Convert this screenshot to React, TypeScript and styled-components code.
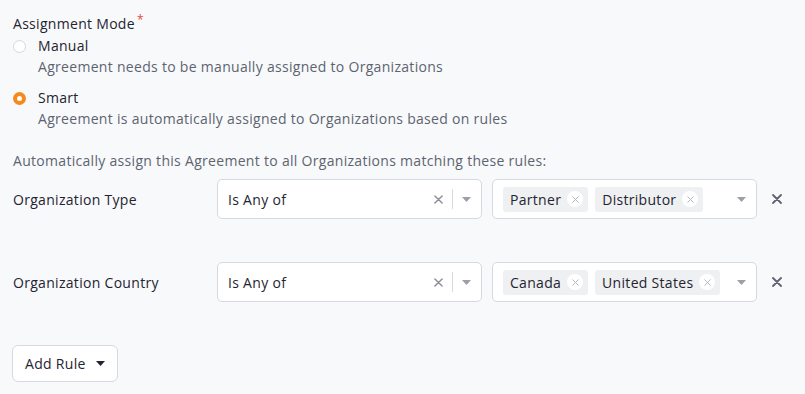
import React from 'react';
import styled, { createGlobalStyle } from 'styled-components';

const GlobalStyle = createGlobalStyle`
  body {
    margin: 0;
    background: #f8f9fb;
    font-family: 'Open Sans', 'Noto Sans', sans-serif;
    letter-spacing: 0.3px;
    color: #1f2430;
  }
`;

const Page = styled.div`
  padding: 13px 13px 12px 13px;
`;

const FieldLabel = styled.div`
  font-size: 14px;
  font-weight: 500;
  line-height: 22px;
  height: 22px;
  color: #1f2430;

  .req {
    color: #e5483c;
    font-size: 12px;
    line-height: 1;
    vertical-align: top;
    margin-left: 2px;
    position: relative;
    top: 1px;
  }
`;

const RadioOption = styled.label`
  display: grid;
  grid-template-columns: 25px 1fr;
  cursor: pointer;
  margin-bottom: 10px;
`;

const RadioDot = styled.span<{ $checked?: boolean }>`
  width: 13px;
  height: 13px;
  box-sizing: border-box;
  border-radius: 50%;
  margin-top: 5px;
  background: #fff;
  border: ${(p) => (p.$checked ? '4px solid #f58b1f' : '1px solid #d5d8de')};
`;

const OptionTitle = styled.div`
  font-size: 14px;
  line-height: 22px;
  color: #1f2430;
`;

const OptionDesc = styled.div`
  font-size: 14px;
  line-height: 20px;
  color: #5d6470;
`;

const Hint = styled.div`
  font-size: 14px;
  line-height: 20px;
  color: #5d6470;
  margin-top: 22px;
`;

const Rules = styled.div`
  display: flex;
  flex-direction: column;
  gap: 43px;
  margin-top: 8px;
`;

const RuleRow = styled.div`
  display: grid;
  grid-template-columns: 194px 265px 265px 20px;
  column-gap: 10px;
  align-items: center;
  height: 40px;
`;

const RuleLabel = styled.div`
  font-size: 14px;
  color: #1f2430;
`;

const SelectBox = styled.div`
  height: 40px;
  box-sizing: border-box;
  background: #fff;
  border: 1px solid #d6dae0;
  border-radius: 5px;
  display: flex;
  align-items: center;
  padding: 0 10px 0 10px;
`;

const SelectValue = styled.div`
  flex: 1;
  font-size: 14px;
  color: #1f2430;
`;

const Chips = styled.div`
  flex: 1;
  display: flex;
  gap: 7px;
`;

const Chip = styled.span`
  display: inline-flex;
  align-items: center;
  height: 25px;
  padding: 0 5px 0 7px;
  background: #eff0f2;
  border-radius: 3px;
  font-size: 14px;
  color: #1f2430;
`;

const ChipClose = styled.span`
  width: 16px;
  height: 16px;
  border-radius: 50%;
  background: #fff;
  margin-left: 6px;
  display: inline-flex;
  align-items: center;
  justify-content: center;
`;

const Indicators = styled.div`
  display: flex;
  align-items: center;
  gap: 9px;
`;

const Separator = styled.span`
  width: 1px;
  height: 20px;
  background: #d6dae0;
`;

const RemoveButton = styled.button`
  border: none;
  background: transparent;
  padding: 0;
  width: 20px;
  height: 20px;
  display: flex;
  align-items: center;
  justify-content: center;
  cursor: pointer;
`;

const AddButton = styled.button`
  margin-top: 43px;
  margin-left: -1px;
  height: 37px;
  width: 106px;
  padding: 0 12px;
  background: #fff;
  border: 1px solid #d6dae0;
  border-radius: 6px;
  font-family: inherit;
  letter-spacing: inherit;
  font-size: 14px;
  font-weight: 500;
  color: #1f2430;
  display: flex;
  align-items: center;
  justify-content: space-between;
  cursor: pointer;
`;

const Cross = ({ size = 8, color = '#8a8f98', width = 1.6 }: { size?: number; color?: string; width?: number }) => (
  <svg width={size} height={size} viewBox="0 0 10 10">
    <path d="M1 1L9 9M9 1L1 9" stroke={color} strokeWidth={width} strokeLinecap="round" />
  </svg>
);

const Caret = ({ color = '#9aa0a8' }: { color?: string }) => (
  <svg width="9" height="5" viewBox="0 0 9 5">
    <path d="M0 0H9L4.5 5Z" fill={color} />
  </svg>
);

type Rule = { label: string; values: string[] };

const rules: Rule[] = [
  { label: 'Organization Type', values: ['Partner', 'Distributor'] },
  { label: 'Organization Country', values: ['Canada', 'United States'] },
];

export default function App() {
  return (
    <Page>
      <GlobalStyle />
      <FieldLabel>
        Assignment Mode<span className="req">*</span>
      </FieldLabel>
      <RadioOption>
        <RadioDot />
        <div>
          <OptionTitle>Manual</OptionTitle>
          <OptionDesc>Agreement needs to be manually assigned to Organizations</OptionDesc>
        </div>
      </RadioOption>
      <RadioOption>
        <RadioDot $checked />
        <div>
          <OptionTitle>Smart</OptionTitle>
          <OptionDesc>Agreement is automatically assigned to Organizations based on rules</OptionDesc>
        </div>
      </RadioOption>
      <Hint>Automatically assign this Agreement to all Organizations matching these rules:</Hint>
      <Rules>
        {rules.map((rule) => (
          <RuleRow key={rule.label}>
            <RuleLabel>{rule.label}</RuleLabel>
            <SelectBox>
              <SelectValue>Is Any of</SelectValue>
              <Indicators>
                <Cross size={9} />
                <Separator />
                <Caret />
              </Indicators>
            </SelectBox>
            <SelectBox>
              <Chips>
                {rule.values.map((v) => (
                  <Chip key={v}>
                    {v}
                    <ChipClose>
                      <Cross size={7} color="#b4b8be" width={1.4} />
                    </ChipClose>
                  </Chip>
                ))}
              </Chips>
              <Caret />
            </SelectBox>
            <RemoveButton>
              <Cross size={10} color="#5d6470" width={1.8} />
            </RemoveButton>
          </RuleRow>
        ))}
      </Rules>
      <AddButton>
        Add Rule
        <Caret color="#1f2430" />
      </AddButton>
    </Page>
  );
}
